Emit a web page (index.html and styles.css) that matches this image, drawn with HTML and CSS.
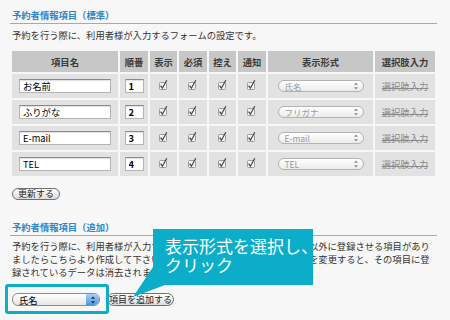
FILE: index.html
```
<!DOCTYPE html>
<html>
<head>
    <meta charset="utf-8">
    <title>予約者情報項目</title>
    <link rel="stylesheet" href="styles.css">
</head>
<body>
    <svg class="defs" width="0" height="0">
        <symbol id="chk" viewBox="0 0 12 12">
            <rect x="1.5" y="3.5" width="7" height="7" rx="1" fill="#f3f3f3" stroke="#9c9c9c"/>
            <path d="M2.6 6.6 L4.4 9.2 L8.8 1.2" fill="none" stroke="#444" stroke-width="1.2"/>
        </symbol>
        <symbol id="updown" viewBox="0 0 5 9">
            <path d="M2.5 0 L5 3 L0 3 Z M2.5 9 L5 6 L0 6 Z"/>
        </symbol>
    </svg>

    <div class="page">
        <h2 class="section-title">予約者情報項目（標準）</h2>
        <p class="section-desc">予約を行う際に、利用者様が入力するフォームの設定です。</p>

        <table class="field-table">
            <thead>
                <tr>
                    <th class="col-name">項目名</th>
                    <th class="col-order">順番</th>
                    <th class="col-flag">表示</th>
                    <th class="col-flag2">必須</th>
                    <th class="col-flag">控え</th>
                    <th class="col-flag2">通知</th>
                    <th class="col-type">表示形式</th>
                    <th class="col-opt">選択肢入力</th>
                </tr>
            </thead>
            <tbody>
                <tr>
                    <td><input class="text-field" type="text" value="お名前"></td>
                    <td><input class="order-field" type="text" value="1"></td>
                    <td><svg class="check"><use href="#chk"/></svg></td>
                    <td><svg class="check"><use href="#chk"/></svg></td>
                    <td><svg class="check"><use href="#chk"/></svg></td>
                    <td><svg class="check"><use href="#chk"/></svg></td>
                    <td><span class="mini-select">氏名<svg class="arrows"><use href="#updown"/></svg></span></td>
                    <td><span class="opt-link">選択肢入力</span></td>
                </tr>
                <tr>
                    <td><input class="text-field" type="text" value="ふりがな"></td>
                    <td><input class="order-field" type="text" value="2"></td>
                    <td><svg class="check"><use href="#chk"/></svg></td>
                    <td><svg class="check"><use href="#chk"/></svg></td>
                    <td><svg class="check"><use href="#chk"/></svg></td>
                    <td><svg class="check"><use href="#chk"/></svg></td>
                    <td><span class="mini-select">フリガナ<svg class="arrows"><use href="#updown"/></svg></span></td>
                    <td><span class="opt-link">選択肢入力</span></td>
                </tr>
                <tr>
                    <td><input class="text-field" type="text" value="E-mail"></td>
                    <td><input class="order-field" type="text" value="3"></td>
                    <td><svg class="check"><use href="#chk"/></svg></td>
                    <td><svg class="check"><use href="#chk"/></svg></td>
                    <td><svg class="check"><use href="#chk"/></svg></td>
                    <td><svg class="check"><use href="#chk"/></svg></td>
                    <td><span class="mini-select">E-mail<svg class="arrows"><use href="#updown"/></svg></span></td>
                    <td><span class="opt-link">選択肢入力</span></td>
                </tr>
                <tr>
                    <td><input class="text-field" type="text" value="TEL"></td>
                    <td><input class="order-field" type="text" value="4"></td>
                    <td><svg class="check"><use href="#chk"/></svg></td>
                    <td><svg class="check"><use href="#chk"/></svg></td>
                    <td><svg class="check"><use href="#chk"/></svg></td>
                    <td><svg class="check"><use href="#chk"/></svg></td>
                    <td><span class="mini-select">TEL<svg class="arrows"><use href="#updown"/></svg></span></td>
                    <td><span class="opt-link">選択肢入力</span></td>
                </tr>
            </tbody>
        </table>

        <button class="pill-btn update-btn">更新する</button>

        <h2 class="section-title section-title-add">予約者情報項目（追加）</h2>
        <p class="section-desc section-desc-multi">予約を行う際に、利用者様が入力するフォームの項目で上記の標準項目以外に登録させる項目があり<br>ましたらこちらより作成して下さい。なお一度作成した項目の表示形式を変更すると、その項目に登<br>録されているデータは消去されます。</p>

        <div class="add-row">
            <span class="type-select">氏名<span class="stepper"><svg class="stepper-arrows"><use href="#updown"/></svg></span></span>
            <button class="pill-btn">項目を追加する</button>
        </div>

        <!-- annotation overlay -->
        <div class="highlight-box"></div>
        <svg class="callout-tail" width="40" height="32" viewBox="0 0 40 32">
            <polygon points="22,0 22,18 34,18 2,30"/>
        </svg>
        <div class="callout">表示形式を選択し、<br>クリック</div>
    </div>
</body>
</html>
```

FILE: styles.css
```
body {
    margin: 0;
    background-color: #f7f7f7;
    font-family: "Noto Sans CJK JP", "Noto Sans", sans-serif;
    font-size: 9.3px;
    color: #333333;
}

.defs {
    position: absolute;
}

.page {
    position: relative;
    padding: 0 13px 0 10px;
    height: 320px;
    box-sizing: border-box;
    overflow: hidden;
}

.section-title {
    margin: 0;
    padding: 9px 0 2px 2px;
    font-size: 9.3px;
    line-height: 12px;
    font-weight: bold;
    color: #2f86c8;
    border-bottom: 1px solid #a9a9a9;
}

.section-desc {
    margin: 5px 0 0 2px;
    line-height: 12px;
    white-space: nowrap;
}

/* table of standard fields */
.field-table {
    margin-top: 8px;
    border-collapse: separate;
    border-spacing: 2px;
    table-layout: fixed;
}

.field-table th,
.field-table td {
    padding: 0;
    text-align: center;
    vertical-align: middle;
}

.field-table th {
    height: 21px;
    background-color: #c7c7c7;
    font-weight: bold;
    color: #3a3a3a;
}

.field-table td {
    height: 24px;
    background-color: #e2e2e2;
}

.col-name { width: 106px; }
.col-order { width: 28px; }
.col-flag { width: 27px; }
.col-flag2 { width: 28px; }
.col-type { width: 105px; }
.col-opt { width: 60px; }

.text-field,
.order-field {
    display: block;
    margin: 0 auto;
    height: 14px;
    box-sizing: border-box;
    padding: 0 3px;
    font-family: inherit;
    font-size: 9.3px;
    color: #000;
    background: #fff;
    border: 1px solid #b4b4b4;
    border-top-color: #8a8a8a;
    box-shadow: inset 0 1px 1px rgba(0, 0, 0, 0.12);
    outline: none;
}

.text-field {
    width: 92px;
}

.order-field {
    width: 19px;
    font-weight: bold;
}

.check {
    display: block;
    width: 12px;
    height: 12px;
    margin: -3px auto 0;
}

.mini-select {
    display: flex;
    align-items: center;
    justify-content: space-between;
    width: 86px;
    height: 12px;
    margin: 0 auto;
    box-sizing: border-box;
    padding: 0 5px 0 6px;
    border: 1px solid #b3b3b3;
    border-radius: 6px;
    background: linear-gradient(#ffffff, #ececec);
    font-size: 8.5px;
    color: #9a9a9a;
    text-align: left;
}

.arrows {
    width: 4px;
    height: 8px;
    fill: #8a8a8a;
}

.opt-link {
    color: #8c8c8c;
    text-decoration: underline;
    text-underline-offset: -2px;
    text-decoration-color: #888;
}

/* buttons */
.pill-btn {
    display: block;
    height: 13px;
    padding: 0 5px;
    font-family: inherit;
    font-size: 9px;
    line-height: 11px;
    color: #222;
    background: linear-gradient(#ffffff, #dcdcdc);
    border: 1px solid #6f6f6f;
    border-radius: 7px;
}

.update-btn {
    margin: 10px 0 0 2px;
    height: 12px;
    line-height: 10px;
}

.section-title-add {
    margin-top: 21px;
    padding-top: 0;
}

.section-desc-multi {
    margin-top: 4px;
    line-height: 12.75px;
}

.add-row {
    display: flex;
    align-items: center;
    gap: 7px;
    margin: 15px 0 0 2px;
}

.add-row .pill-btn {
    width: 67px;
    padding: 0;
}

.type-select {
    display: flex;
    align-items: center;
    justify-content: space-between;
    width: 88px;
    height: 13px;
    box-sizing: border-box;
    padding-left: 6px;
    border: 1px solid #8c8c8c;
    border-radius: 6px;
    background: linear-gradient(#ffffff, #e6e6e6);
    color: #000;
    overflow: hidden;
}

.stepper {
    display: flex;
    align-items: center;
    justify-content: center;
    width: 13px;
    height: 100%;
    background: linear-gradient(#a8d0f5, #4c97e2);
}

.stepper-arrows {
    width: 4px;
    height: 8px;
    fill: #1c2a44;
}

/* annotation */
.highlight-box {
    position: absolute;
    left: 5px;
    top: 284px;
    width: 104px;
    height: 30px;
    box-sizing: border-box;
    border: 3px solid #0badc9;
    border-radius: 3px;
}

.callout {
    position: absolute;
    left: 153px;
    top: 229px;
    width: 160px;
    height: 56px;
    box-sizing: border-box;
    padding: 7px 0 0 12px;
    background-color: #0badc9;
    color: #ffffff;
    font-size: 17px;
    line-height: 19px;
    white-space: nowrap;
}

.callout-tail {
    position: absolute;
    left: 131px;
    top: 267px;
    fill: #0badc9;
}
```
